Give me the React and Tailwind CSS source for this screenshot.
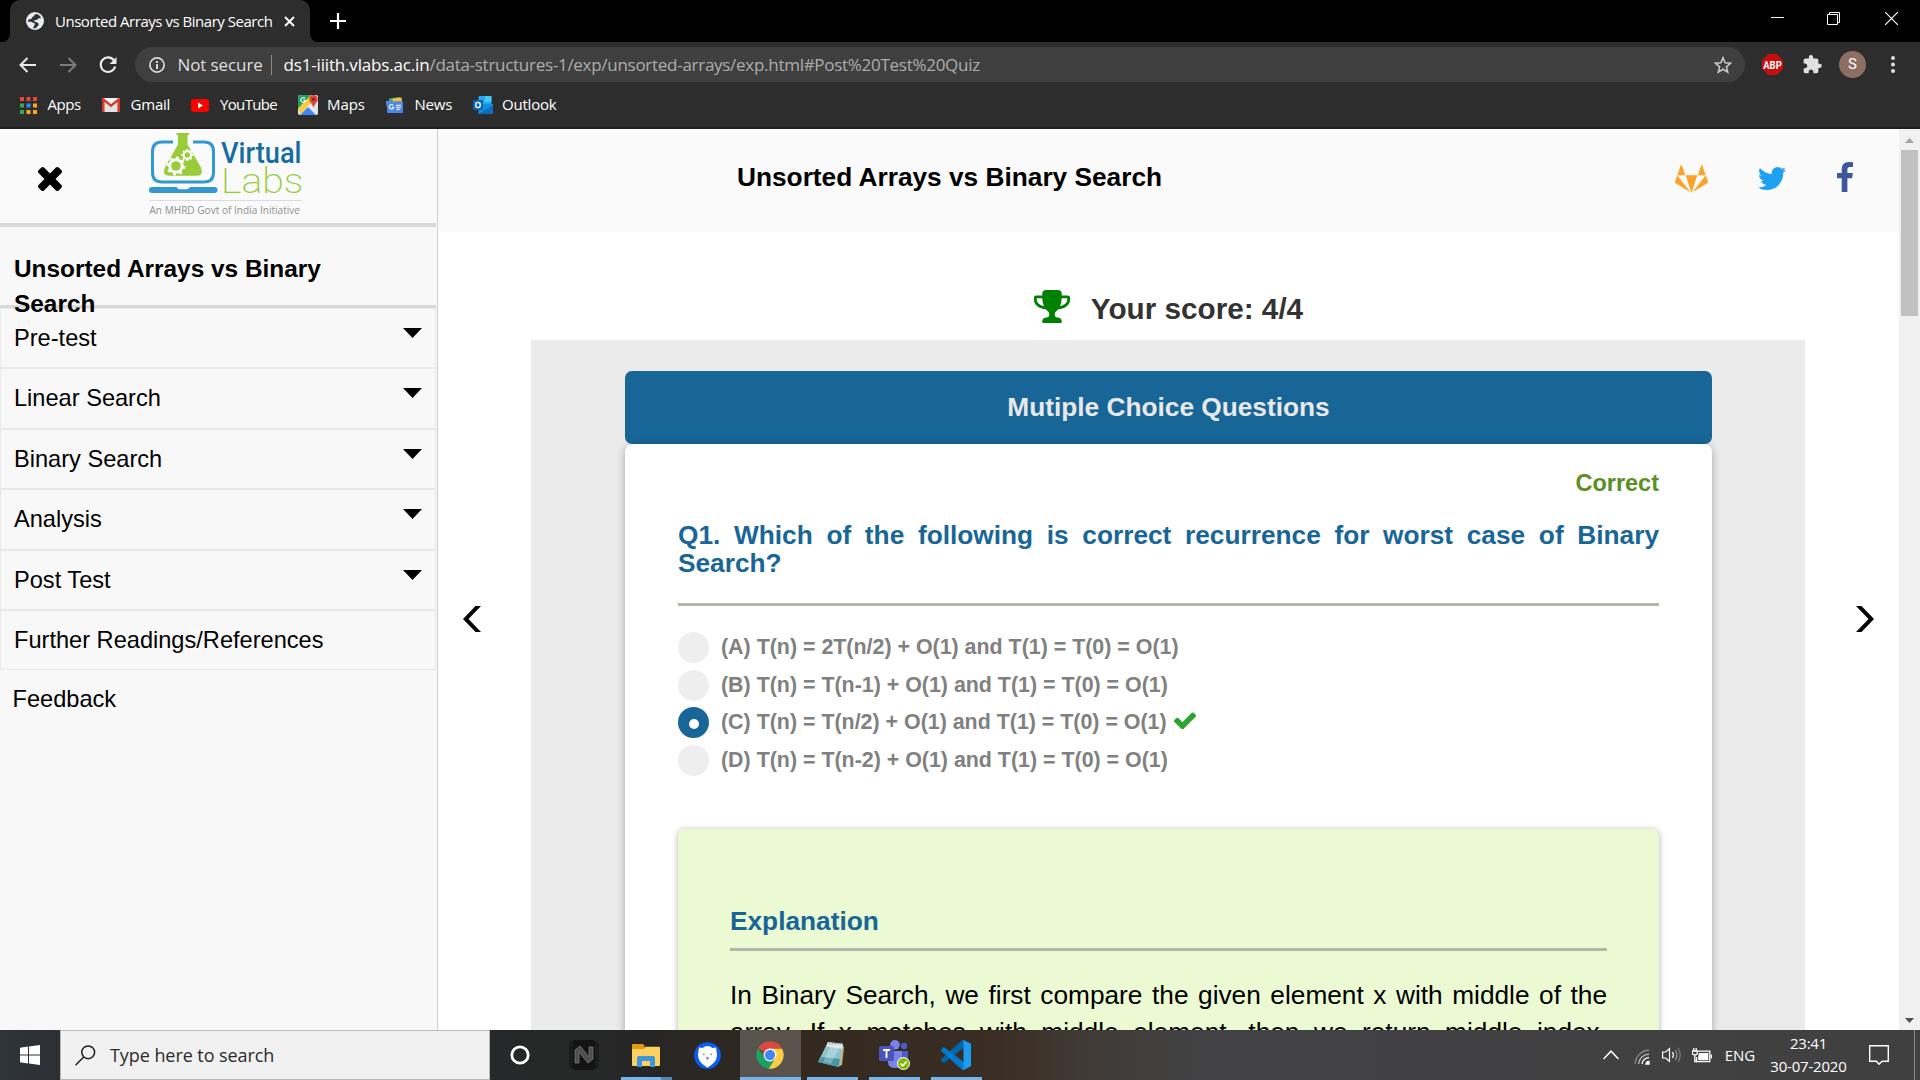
import React from "react";

/* ---------- Browser chrome ---------- */

function GlobeIcon() {
  return (
    <svg width="18" height="18" viewBox="0 0 18 18">
      <circle cx="9" cy="9" r="9" fill="#e8eaed" />
      <path d="M10.500 1.900C8 2.500 8.500 4 7.200 4.600c-1.300.5-.9 1.600-1.800 2.200-1 .6-2.300.3-3.300 1.300l.1 1.900c1.200-.9 2.600-.7 3.400.1.700.8 1.900.6 2.800 1.100.9.7.1 1.700-.2 2.500-.2.900-.8 1.700-1.400 2.300 1.100.3 2.200.3 3.300 0 .5-1.600 2.500-1.900 2.700-3.500 0-1.500-1.300-1.700-2.200-2.300-.9-.5-2.300-.2-2.600-1.100 0-1 1.400-.9 2.400-1.100 1.200-.3 1.300-1.500 2.500-1.800.8-.2 1.500.2 2.300-.1-1-2.200-2.500-3.700-4.700-4.200z" fill="#303134" />
    </svg>
  );
}

function TabStrip() {
  return (
    <div className="flex h-[42px] bg-black pl-[10px]">
      <div className="relative flex w-[300px] items-center rounded-t-[10px] bg-[#2d2d2d] pl-[16px]">
        <div className="absolute bottom-0 -left-[8px] h-[8px] w-[8px] bg-[#2d2d2d]">
          <div className="h-full w-full rounded-br-[8px] bg-black" />
        </div>
        <div className="absolute -right-[8px] bottom-0 h-[8px] w-[8px] bg-[#2d2d2d]">
          <div className="h-full w-full rounded-bl-[8px] bg-black" />
        </div>
        <GlobeIcon />
        <span className="ml-[11px] w-[224px] text-[15px] leading-[20px] tracking-[-0.47px] whitespace-nowrap text-white">
          Unsorted Arrays vs Binary Search
        </span>
        <svg className="ml-[5px]" width="11" height="11" viewBox="0 0 11 11">
          <path d="M1 1l9 9M10 1l-9 9" stroke="#fff" strokeWidth="1.900" />
        </svg>
      </div>
      <svg className="mt-[13px] ml-[19.500px]" width="16" height="16" viewBox="0 0 16 16">
        <path d="M8 0v16M0 8h16" stroke="#fff" strokeWidth="2.200" />
      </svg>
      <div className="mr-[22px] ml-auto flex items-start">
        <svg className="mt-[17px]" width="13" height="1" viewBox="0 0 13 1">
          <path d="M0 .5h13" stroke="#fff" />
        </svg>
        <svg className="mt-[12px] ml-[43px]" width="13" height="13" viewBox="0 0 13 13" fill="none" stroke="#fff">
          <path d="M.5 2.500h10v10h-10zM2.500 2.500v-2h10v10h-2" />
        </svg>
        <svg className="mt-[12px] ml-[45px]" width="13" height="13" viewBox="0 0 13 13">
          <path d="M0 0l13 13M13 0L0 13" stroke="#fff" strokeWidth="1.200" />
        </svg>
      </div>
    </div>
  );
}

function AddressBar() {
  return (
    <div className="flex h-[45px] items-center bg-[#2d2d2d] pl-[19px]">
      <svg width="17" height="16" viewBox="0 0 17 16" fill="none" stroke="#e8eaed" strokeWidth="2">
        <path d="M17 8H1.500M8.500 1l-7 7 7 7" />
      </svg>
      <svg className="ml-[24px]" width="17" height="16" viewBox="0 0 17 16" fill="none" stroke="#7c7c7c" strokeWidth="2">
        <path d="M0 8h15.500M8.500 1l7 7-7 7" />
      </svg>
      <svg className="ml-[22px]" width="18" height="18" viewBox="0 0 18 18">
        <path d="M14.800 4.200A7.300 7.300 0 1 0 16.100 10.500" fill="none" stroke="#e8eaed" strokeWidth="2.100" />
        <path d="M17.500 1v7h-7z" fill="#e8eaed" />
      </svg>
      <div className="ml-[18px] flex h-[35px] w-[1610px] items-center rounded-full bg-[#3f3f3f] pl-[14px] text-[17px] leading-[24px]">
        <svg width="16" height="16" viewBox="0 0 16 16">
          <circle cx="8" cy="8" r="7.100" fill="none" stroke="#dcdcdc" strokeWidth="1.700" />
          <path d="M8 7v5M8 4v1.900" stroke="#dcdcdc" strokeWidth="1.900" />
        </svg>
        <span className="ml-[12.500px] w-[85.500px] tracking-[-0.1px] whitespace-nowrap text-[#dedede]">Not secure</span>
        <span className="ml-[8px] h-[20px] w-px bg-[#8a8a8a]" />
        <span className="ml-[11.500px] tracking-[-0.17px] whitespace-nowrap text-white">ds1-iiith.vlabs.ac.in</span>
        <span className="tracking-[-0.280px] whitespace-nowrap text-[#adadad]">
          /data-structures-1/exp/unsorted-arrays/exp.html#Post%20Test%20Quiz
        </span>
        <svg className="mr-[13.500px] ml-auto" width="18" height="18" viewBox="0 0 18 18" fill="none" stroke="#c9c9c9" strokeWidth="1.600">
          <path d="M9 1.800l2.100 5 5.400.45-4.100 3.550 1.250 5.300L9 13.300l-4.650 2.800 1.250-5.300L1.500 7.250l5.400-.45z" />
        </svg>
      </div>
      <div className="ml-[17px] flex h-[21px] w-[21px]">
        <svg className="overflow-visible" width="21" height="21" viewBox="0 0 21 21">
          <path d="M6.200 0h8.600L21 6.200v8.600L14.800 21H6.200L0 14.800V6.200z" fill="#c70d0d" />
          <text x="10.500" y="14.500" textAnchor="middle" textLength="18.500" lengthAdjust="spacingAndGlyphs" fontFamily="Roboto, sans-serif" fontSize="11.500" fontWeight="700" fill="#fff">ABP</text>
        </svg>
      </div>
      <svg className="ml-[20px]" width="19" height="19" viewBox="1.500 1 21.500 22">
        <path d="M20.500 11H19V7c0-1.100-.9-2-2-2h-4V3.500a2.500 2.500 0 0 0-5 0V5H4c-1.100 0-2 .9-2 2v3.800h1.500c1.500 0 2.700 1.200 2.700 2.700S5 16.200 3.500 16.200H2V20c0 1.100.9 2 2 2h3.800v-1.500c0-1.500 1.200-2.700 2.700-2.700s2.700 1.200 2.700 2.700V22H17c1.100 0 2-.9 2-2v-4h1.500a2.500 2.500 0 0 0 0-5z" fill="#e0e0e0" />
      </svg>
      <div className="ml-[17px] flex h-[27px] w-[27px] items-center justify-center rounded-full bg-[#8d6e63] font-['Roboto'] text-[15px] text-white">S</div>
      <svg className="ml-[24.500px]" width="4" height="17" viewBox="0 0 4 17" fill="#e0e0e0">
        <circle cx="2" cy="2" r="2" />
        <circle cx="2" cy="8.500" r="2" />
        <circle cx="2" cy="15" r="2" />
      </svg>
    </div>
  );
}

function BookmarksBar() {
  return (
    <div className="flex h-[42px] items-start border-b-2 border-[#1e1e1e] bg-[#2d2d2d] pl-[20px] text-[15px] leading-[20px] whitespace-nowrap text-white">
      <div className="mt-[8px] flex h-[20px] w-[82px] items-center">
        <svg width="17" height="17" viewBox="0 0 17 17">
          <path d="M0 0h4v4H0zM6.500 0h4v4h-4zM13 0h4v4h-4z" fill="#e8453c" />
          <path d="M0 6.500h4v4H0z" fill="#34a853" />
          <path d="M6.500 6.500h4v4h-4z" fill="#2f86f6" />
          <path d="M13 6.500h4v4h-4zM6.500 13h4v4h-4zM13 13h4v4h-4z" fill="#f7a81b" />
          <path d="M0 13h4v4H0z" fill="#34a853" />
        </svg>
        <span className="-mt-[2px] ml-[10.500px] tracking-[-0.45px]">Apps</span>
      </div>
      <div className="mt-[8px] flex h-[20px] w-[89px] items-center">
        <svg width="18" height="14" viewBox="0 0 18 14">
          <rect width="18" height="14" rx="1.500" fill="#f2f2f2" />
          <path d="M3 14V4l6 5 6-5v10" fill="#e3e3e3" />
          <path d="M0 14V1.500C0 .6.6 0 1.400 0L9 6.300 16.600 0c.8 0 1.400.6 1.400 1.500V14h-2.600V4.100L9 9.300 2.600 4.100V14z" fill="#d8392f" />
        </svg>
        <span className="-mt-[2px] ml-[10.500px] tracking-[-0.2px]">Gmail</span>
      </div>
      <div className="mt-[8px] flex h-[20px] w-[107px] items-center">
        <svg width="18" height="13" viewBox="0 0 18 13">
          <rect width="18" height="13" rx="3" fill="#f00" />
          <path d="M7 3.600v5.800l5-2.900z" fill="#fff" />
        </svg>
        <span className="-mt-[2px] ml-[11px] tracking-[-0.65px]">YouTube</span>
      </div>
      <div className="mt-[8px] flex h-[20px] w-[88px] items-center">
        <svg width="20" height="20" viewBox="0 0 20 20">
          <rect width="20" height="20" rx="2" fill="#eceff1" />
          <path d="M2 0h12L0 15V2c0-1.100.9-2 2-2z" fill="#1fa463" />
          <path d="M0 13.500L13 0l3 5L2 19.500z" fill="#fbcb3c" />
          <path d="M2 20l8-8 8 8z" fill="#4285f4" />
          <path d="M11 9l9 9.500V4z" fill="#dfe3e8" />
          <path d="M15.500 0c2.500 0 4.300 1.900 4.300 4.200 0 3-2.800 3.800-4.300 8.300-1.400-4.500-4.200-5.300-4.200-8.300C11.300 1.900 13 0 15.500 0z" fill="#db4437" />
          <circle cx="15.500" cy="4.200" r="1.500" fill="#7c221b" />
          <path d="M6.900 3.300a2.400 2.400 0 1 0 .7 1.900H5.200" fill="none" stroke="#fff" strokeWidth="1.100" />
        </svg>
        <span className="-mt-[2px] ml-[9px] tracking-[-0.08px]">Maps</span>
      </div>
      <div className="mt-[8px] flex h-[20px] w-[87px] items-center">
        <svg width="18" height="16" viewBox="0 0 18 16">
          <path d="M3 1.500L14 0l1 5H3z" fill="#3bb35c" />
          <path d="M7 1.500L15.500.6 16 5H6z" fill="#f9c22e" />
          <path d="M0 4h4v6H.8z" fill="#6ca3f2" />
          <rect x="1" y="4.200" width="16" height="11.800" rx="1" fill="#4f86ec" />
          <path d="M7.200 8.300a2.200 2.200 0 1 0 .5 2H5.800M10 8.300h5M10 10.300h5M10 12.300h4" fill="none" stroke="#fff" strokeWidth="1.100" />
        </svg>
        <span className="-mt-[2px] ml-[10.500px] tracking-[-0.2px]">News</span>
      </div>
      <div className="mt-[8px] flex h-[20px] items-center">
        <svg width="20" height="18" viewBox="0 0 20 18">
          <rect x="5.500" width="13" height="11" rx="1" fill="#28a8ea" />
          <path d="M12 0h6.500v6H12z" fill="#50d9ff" opacity=".7" />
          <path d="M5.500 8h14.500v9c0 .6-.4 1-1 1H6.500c-.6 0-1-.4-1-1z" fill="#1490df" />
          <path d="M5.500 18L20 9v8c0 .6-.4 1-1 1z" fill="#0f6cbd" />
          <rect y="4" width="10" height="10" rx="1" fill="#0a64b8" />
          <ellipse cx="5" cy="9" rx="2.300" ry="2.600" fill="none" stroke="#fff" strokeWidth="1.400" />
        </svg>
        <span className="-mt-[2px] ml-[9px] tracking-[-0.2px]">Outlook</span>
      </div>
    </div>
  );
}

/* ---------- Sidebar ---------- */

function Logo() {
  const teeth = [0, 45, 90, 135];
  return (
    <svg className="overflow-visible" width="155" height="88" viewBox="148 131 155 88">
      <path d="M173 142h-11q-9.500 0-9.500 9.500v21q0 9.500 9.500 9.500h42q9.500 0 9.500-9.500v-21q0-9.500-9.500-9.500h-11" fill="none" stroke="#3398d0" strokeWidth="3" />
      <path d="M152 187h24.500q1.500 2.200 3 2.200h7.500q1.500 0 3-2.200h24.500q3 0 3 3t-3 3H152q-3 0-3-3t3-3z" fill="#3398d0" />
      <path d="M176.500 133h12.500v2h-1.500v9.500l13.300 22.500q3.500 8.700-4.300 8.700h-27q-8 0-4.400-8.700l12.900-22.500V135h-1.500z" fill="#99cc39" />
      <g stroke="#fff" strokeWidth="2.900">
        {teeth.map((a) => (
          <path key={a} d="M166.500 166h19" transform={`rotate(${a + 10} 176 166)`} />
        ))}
      </g>
      <circle cx="176" cy="166" r="7.700" fill="#fff" />
      <circle cx="176" cy="166" r="4.800" fill="#99cc39" />
      <g stroke="#fff" strokeWidth="2">
        {teeth.map((a) => (
          <path key={a} d="M181.300 155h12" transform={`rotate(${a} 187.300 155)`} />
        ))}
      </g>
      <circle cx="187.300" cy="155" r="4.800" fill="#fff" />
      <circle cx="187.300" cy="155" r="2.700" fill="#99cc39" />
      <text x="221" y="163" textLength="80.500" lengthAdjust="spacingAndGlyphs" fontFamily="Roboto, sans-serif" fontSize="29.500" fontWeight="500" fill="#156ca3">Virtual</text>
      <text x="221" y="193" textLength="82.500" lengthAdjust="spacingAndGlyphs" fontFamily="Roboto, sans-serif" fontSize="35" fontWeight="200" fill="#99cc39">Labs</text>
      <path d="M149 200.500h153" stroke="#dcdcdc" />
      <text x="149.500" y="213.700" textLength="150.500" lengthAdjust="spacingAndGlyphs" fontFamily="Open Sans, sans-serif" fontSize="11" fill="#8f8f8f">An MHRD Govt of India Initiative</text>
    </svg>
  );
}

const NAV = [
  { label: "Pre-test", caret: true },
  { label: "Linear Search", caret: true },
  { label: "Binary Search", caret: true },
  { label: "Analysis", caret: true },
  { label: "Post Test", caret: true },
  { label: "Further Readings/References", caret: false },
];

function Sidebar() {
  return (
    <aside className="flex w-[438px] shrink-0 flex-col border-r border-[#cfcfcf] bg-[#f8f8f8] font-['Liberation_Sans',sans-serif] text-black">
      <div className="mr-px flex h-[98px] items-start border-b-4 border-[#d9d9d9] bg-[#fafafa]">
        <svg className="mt-[38px] ml-[38px]" width="24" height="24" viewBox="302 366 1188 1188" preserveAspectRatio="none">
          <path d="M1490 1322q0 40-28 68l-136 136q-28 28-68 28t-68-28l-294-294-294 294q-28 28-68 28t-68-28l-136-136q-28-28-28-68t28-68l294-294-294-294q-28-28-28-68t28-68l136-136q28-28 68-28t68 28l294 294 294-294q28-28 68-28t68 28l136 136q28 28 28 68t-28 68l-294 294 294 294q28 28 28 68z" />
        </svg>
        <div className="mt-[2px] ml-[86px]">
          <Logo />
        </div>
      </div>
      <div className="mr-px h-[81px] border-b-[3px] border-[#d9d9d9] pt-[23.500px] pl-[14px]">
        <h2 className="relative z-10 w-[360px] text-[24.4px] leading-[35px] font-bold">Unsorted Arrays vs Binary Search</h2>
      </div>
      <nav className="mr-px">
        {NAV.map((item) => (
          <div key={item.label} className="flex h-[60.400px] items-start justify-between border border-[#e9e9e9] pr-[13px] pl-[13px]">
            <span className="mt-[11px] text-[23.600px] leading-[36px] whitespace-nowrap">{item.label}</span>
            {item.caret && (
              <svg className="mt-[19px]" width="19" height="10" viewBox="0 0 19 10">
                <path d="M0 0h19l-9.500 10z" />
              </svg>
            )}
          </div>
        ))}
      </nav>
      <div className="mt-[10.500px] ml-[12.500px] text-[23.600px] leading-[36px]">Feedback</div>
    </aside>
  );
}

/* ---------- Main content ---------- */

function MainHeader() {
  return (
    <header className="flex h-[103px] items-start bg-[#fafafa] pl-[299px]">
      <h1 className="mt-[32px] w-[936px] text-[26.250px] leading-[32px] font-bold whitespace-nowrap text-black">
        Unsorted Arrays vs Binary Search
      </h1>
      <svg className="mt-[35px] ml-[2px]" width="33" height="29" viewBox="0 0 33 29" fill="#fca326">
        <path d="M6.200 0l4.100 11.300H2.300zM26.800 0l3.900 11.300h-8zM10.700 11.300h11.600L16.500 29zM2.300 11.300L15.500 28.300.7 19.200Q-.2 18.500.1 17.500zM30.700 11.300L17.500 28.300l14.800-9.100q.9-.7.6-1.700z" />
      </svg>
      <svg className="mt-[38px] ml-[50px]" width="28" height="23" viewBox="108 256 1576 1280" preserveAspectRatio="none">
        <path fill="#1da1f2" d="M1684 408q-67 98-162 167 1 14 1 42 0 130-38 259.500t-115.500 248.500-184.500 210.500-258 146-323 54.500q-271 0-496-145 35 4 78 4 225 0 401-138-105-2-188-64.500t-114-159.500q33 5 61 5 43 0 85-11-112-23-185.500-111.500t-73.500-205.500v-4q68 38 146 41-66-44-105-115t-39-154q0-88 44-163 121 149 294.500 238.500t371.500 99.500q-8-38-8-74 0-134 94.500-228.500t228.500-94.500q140 0 236 102 109-21 205-78-37 115-142 178 93-10 186-50z" />
      </svg>
      <svg className="mt-[33px] ml-[51px]" width="16" height="30" viewBox="479 0 864 1664" preserveAspectRatio="none">
        <path fill="#3b5998" d="M1343 12v264h-157q-86 0-116 36t-30 108v189h293l-39 296h-254v759h-306v-759h-255v-296h255v-218q0-186 104-288.500t277-102.500q147 0 228 12z" />
      </svg>
    </header>
  );
}

const OPTIONS = [
  "(A) T(n) = 2T(n/2) + O(1) and T(1) = T(0) = O(1)",
  "(B) T(n) = T(n-1) + O(1) and T(1) = T(0) = O(1)",
  "(C) T(n) = T(n/2) + O(1) and T(1) = T(0) = O(1)",
  "(D) T(n) = T(n-2) + O(1) and T(1) = T(0) = O(1)",
];
const SELECTED = 2;

function Option({ text, selected }) {
  return (
    <div className="flex h-[37.600px] items-start">
      <div className={selected ? "flex h-[31.250px] w-[31.250px] items-center justify-center rounded-full bg-[#186697]" : "h-[31.250px] w-[31.250px] rounded-full bg-[#eeeeee]"}>
        {selected && <div className="mt-[2px] ml-[1px] h-[10px] w-[10px] rounded-full bg-white" />}
      </div>
      <span className="ml-[11.750px] text-[21.400px] leading-[31px] font-bold whitespace-nowrap text-[#808080]">{text}</span>
      {selected && (
        <svg className="mt-[5px] ml-[7px]" width="22" height="17" viewBox="121 302 1550 1188" preserveAspectRatio="none">
          <path fill="#2ca52c" d="M1671 566q0 40-28 68l-724 724-136 136q-28 28-68 28t-68-28l-136-136-362-362q-28-28-28-68t28-68l136-136q28-28 68-28t68 28l294 295 656-657q28-28 68-28t68 28l136 136q28 28 28 68z" />
        </svg>
      )}
    </div>
  );
}

function Quiz() {
  return (
    <section className="h-[690px] w-[1274px] shrink-0 overflow-hidden bg-[#ebebeb] pt-[31px] pr-[93px] pl-[94px]">
      <div className="flex h-[73px] items-center justify-center rounded-[7px] bg-[#186697] text-[26.250px] leading-[30px] font-bold text-[#e9e9e9]">
        <span className="-mt-[1px]">Mutiple Choice Questions</span>
      </div>
      <div className="h-[700px] rounded-t-[8px] bg-white px-[53px] pt-[24px] shadow-[0_2px_8px_rgba(0,0,0,0.3)]">
        <p className="text-right text-[23.500px] leading-[30px] font-bold text-[#5b8f22]">Correct</p>
        <div className="mt-[23px] text-[26.250px] leading-[28px] font-bold whitespace-nowrap text-[#186697]">
          <p className="[text-align-last:justify]">Q1. Which of the following is correct recurrence for worst case of Binary</p>
          <p>Search?</p>
        </div>
        <div className="mt-[26px] h-[3px] bg-[#b4b4aa]" />
        <div className="mt-[26px]">
          {OPTIONS.map((text, i) => (
            <Option key={text} text={text} selected={i === SELECTED} />
          ))}
        </div>
        <div className="mt-[46.600px] h-[300px] rounded-t-[6px] bg-[#ebfad2] px-[52px] pt-[78px] shadow-[0_1px_6px_rgba(0,0,0,0.3)]">
          <h3 className="text-[26.250px] leading-[28px] font-bold text-[#186697]">Explanation</h3>
          <div className="mt-[13px] h-[3px] bg-[#b3b6a9]" />
          <div className="mt-[26px] text-[26.250px] leading-[37px] whitespace-nowrap text-black">
            <p className="[text-align-last:justify]">In Binary Search, we first compare the given element x with middle of the</p>
            <p className="[text-align-last:justify]">array. If x matches with middle element, then we return middle index.</p>
          </div>
        </div>
      </div>
    </section>
  );
}

function Main() {
  return (
    <main className="flex w-[1461px] shrink-0 flex-col bg-white font-['Liberation_Sans',sans-serif]">
      <MainHeader />
      <div className="flex h-[108px] items-start justify-center pt-[58px]">
        <svg width="36" height="33" viewBox="64 128 1664 1536" preserveAspectRatio="none">
          <path fill="#008000" d="M521 883q-74-162-74-371h-256v96q0 78 94.500 162t235.500 113zm1079-275v-96h-256q0 209-74 371 141-29 235.500-113t94.500-162zm128-128v128q0 71-41.500 143t-112 130-173 97.500-215.500 44.500q-42 54-95 95-38 34-52.500 72.500t-14.500 89.500q0 54 30.500 91t97.500 37q75 0 133.500 45.500t58.500 114.500v64q0 14-9 23t-23 9h-832q-14 0-23-9t-9-23v-64q0-69 58.500-114.500t133.500-45.500q67 0 97.500-37t30.500-91q0-51-14.500-89.500t-52.500-72.500q-53-41-95-95-113-5-215.500-44.500t-173-97.500-112-130-41.500-143v-128q0-40 28-68t68-28h288v-96q0-66 47-113t113-47h576q66 0 113 47t47 113v96h288q40 0 68 28t28 68z" />
        </svg>
        <span className="ml-[21px] text-[29.700px] leading-[38px] font-bold text-[#333333]">Your score: 4/4</span>
      </div>
      <div className="flex items-start">
        <div className="w-[93px] pt-[266px] pl-[25px]">
          <svg width="18" height="26" viewBox="0 0 18 26">
            <path d="M12.500 0H18L5.500 13 18 26h-5.500L0 13z" />
          </svg>
        </div>
        <Quiz />
        <div className="w-[94px] pt-[266px] pl-[51px]">
          <svg width="18" height="26" viewBox="0 0 18 26">
            <path d="M5.500 0H0l12.500 13L0 26h5.500L18 13z" />
          </svg>
        </div>
      </div>
    </main>
  );
}

function Scrollbar() {
  return (
    <div className="flex w-[21px] flex-col items-center bg-[#f1f1f1]">
      <svg className="mt-[9px]" width="9" height="5" viewBox="0 0 9 5">
        <path d="M0 5h9L4.500 0z" fill="#a3a3a3" />
      </svg>
      <div className="mt-[7px] h-[166px] w-[17px] bg-[#c1c1c1]" />
      <svg className="mt-auto mb-[7px]" width="9" height="5" viewBox="0 0 9 5">
        <path d="M0 0h9L4.500 5z" fill="#505050" />
      </svg>
    </div>
  );
}

/* ---------- Taskbar ---------- */

function TaskIcon({ className, bar, children }) {
  return (
    <div className={`flex h-full flex-col items-center justify-between ${className}`}>
      <div className="flex h-[47px] items-center pt-[3px]">{children}</div>
      {bar ? <div className="h-[3px] w-full bg-[#76b4ee]" /> : null}
    </div>
  );
}

function Taskbar() {
  return (
    <footer className="flex h-[50px] bg-[linear-gradient(90deg,#2f3439_0px,#2c3034_60px,#262929_500px,#262626_640px,#33291f_800px,#3a2e24_1000px,#403a34_1080px,#424244_1200px,#404041_1920px)] font-['Open_Sans',sans-serif] text-white">
      <div className="flex w-[60px] items-center justify-center">
        <svg width="20" height="20" viewBox="0 0 20 20" fill="#fff">
          <path d="M0 2.800L8 1.600v7.900H0zM9 1.500L20 0v9.500H9zM0 10.500h8v7.900l-8-1.200zM9 10.500h11V20L9 18.500z" />
        </svg>
      </div>
      <div className="flex w-[430px] items-center border border-[#b8b8b8] bg-[#f1f1f1] pl-[14px] text-[#2b2b2b]">
        <svg width="21" height="21" viewBox="0 0 21 21" fill="none" stroke="#1f1f1f" strokeWidth="1.500">
          <circle cx="13.200" cy="7.300" r="6.400" />
          <path d="M8.700 11.900L.5 20.300" />
        </svg>
        <span className="ml-[14px] text-[18px] leading-[24px] tracking-[-0.07px]">Type here to search</span>
      </div>
      <TaskIcon className="w-[60px]">
        <svg width="20" height="20" viewBox="0 0 20 20">
          <circle cx="10" cy="10" r="8.200" fill="none" stroke="#fff" strokeWidth="2.800" />
        </svg>
      </TaskIcon>
      <TaskIcon className="ml-[3px] w-[62px]">
        <svg width="30" height="30" viewBox="0 0 30 30">
          <path d="M2 1h26l2 3v22l-2 3H2l-2-3V4z" fill="#1c1c1c" />
          <rect x="4" width="22" height="30" rx="2" fill="#131313" />
          <path d="M6 23V10l5-4 9 11V7h4v12l-5 4-9-11v11z" fill="#4e4e4e" stroke="#777" strokeWidth=".8" />
        </svg>
      </TaskIcon>
      <div className="ml-[6px] flex h-full w-[51px] flex-col items-center justify-between">
        <div className="flex h-[47px] items-center pt-[3px]">
          <svg className="-ml-[1px]" width="28" height="23" viewBox="0 0 28 23">
            <path d="M0 1q0-1 1-1h10l2 2.500-2 2.500H0z" fill="#e09c10" />
            <path d="M0 5h11l2.500-2.300H27q1 0 1 1V21q0 1-1 1H1q-1 0-1-1z" fill="#fbd15f" />
            <path d="M5 23V14q0-2 2-2h14q2 0 2 2v9h-5v-6h-8v6z" fill="#3d97dc" />
          </svg>
        </div>
        <div className="flex h-[3px] w-full">
          <div className="w-[40px] bg-[#76b4ee]" />
          <div className="w-[11px] bg-[#5688b4]" />
        </div>
      </div>
      <TaskIcon className="ml-[4px] w-[62px]">
        <svg width="27" height="27" viewBox="0 0 27 27">
          <circle cx="13.500" cy="13.500" r="13.300" fill="#0a5cf5" />
          <path d="M5 5.500l3.500.5Q13.500 2 18.500 6l3.500-.5 1 7q0 6-4.500 9.500-5 3.800-5 3.800T8.500 22Q4 18.500 4 12.500z" fill="#fff" />
          <path d="M13.500 14.500l1.800 1.800-1.800 1.500-1.800-1.500z" fill="#888" />
          <circle cx="9.800" cy="12.300" r=".9" fill="#888" />
          <circle cx="17.200" cy="12.300" r=".9" fill="#888" />
        </svg>
      </TaskIcon>
      <TaskIcon bar className="ml-[2px] w-[61px] bg-white/20">
        <svg className="-ml-[1px]" width="28" height="28" viewBox="0 0 48 48">
          <path d="M24 24L3.600 12.300A23.500 23.500 0 0 1 44.400 12.300L44.400 13.300H24z" fill="#db4a3f" />
          <path d="M3.600 12.300A23.500 23.500 0 0 0 21.800 47.400L33.300 29.400 24 24 14.700 29.400z" fill="#1aa260" />
          <path d="M44.700 13.300A23.500 23.500 0 0 1 21.800 47.400L33.300 29.400 24 13.300z" fill="#ffcd42" />
          <circle cx="24" cy="24" r="11" fill="#fff" />
          <circle cx="24" cy="24" r="8.800" fill="#4285f4" />
        </svg>
      </TaskIcon>
      <TaskIcon bar className="ml-[6px] w-[51px]">
        <svg className="-ml-[2px]" width="28" height="28" viewBox="0 0 28 28">
          <path d="M23 3l3 3-2 18-5 2z" fill="#c9b27a" />
          <path d="M10 1l15 2-4 23L0 21z" fill="#8cc3cf" />
          <path d="M10 1l15 2-1 5L8 5.500z" fill="#dfe7ea" />
          <path d="M4 16l18 2-1.500 8L0 21z" fill="#4b96a6" />
          <path d="M11 2.500h13" stroke="#8f9496" strokeWidth="1.500" strokeDasharray="1.500 1.300" />
          <path d="M12 6l-7 15 8 2 8-16z" fill="#fff" opacity=".25" />
        </svg>
      </TaskIcon>
      <TaskIcon bar className="ml-[11px] w-[51px]">
        <svg width="31" height="30" viewBox="0 0 31 30">
          <circle cx="25" cy="6" r="3.200" fill="#5059c9" />
          <path d="M20 11h9v9q0 5-5 5h-4z" fill="#5059c9" />
          <circle cx="16" cy="4.800" r="4.800" fill="#7b83eb" />
          <path d="M9 11h14v11q0 6-7 6t-7-6z" fill="#7b83eb" />
          <rect y="6" width="15" height="15" rx="1.500" fill="#4b53bc" />
          <path d="M4 10h7M7.500 10v8" stroke="#fff" strokeWidth="1.900" />
          <circle cx="24.500" cy="23.500" r="6.500" fill="#fff" />
          <circle cx="24.500" cy="23.500" r="5.500" fill="#7fba00" />
          <path d="M21.500 23.500l2.200 2.300 3.900-4.300" fill="none" stroke="#fff" strokeWidth="1.700" />
        </svg>
      </TaskIcon>
      <TaskIcon bar className="ml-[11px] w-[51px]">
        <svg className="-ml-[1px]" width="30" height="30" viewBox="0 0 100 100">
          <path d="M96.500 10.700L75.900.8c-2.400-1.200-5.200-.7-7.100 1.200L1.300 63.400c-1.800 1.600-1.800 4.500 0 6.100l5.500 5c1.500 1.400 3.700 1.500 5.300.2L93.300 13.400c2.700-2.100 6.600-.1 6.600 3.300v-.3c0-2.400-1.300-4.600-3.400-5.700z" fill="#0065a9" />
          <path d="M96.500 89.300L75.900 99.200c-2.400 1.200-5.200.7-7.100-1.200L1.300 36.600c-1.800-1.600-1.800-4.500 0-6.100l5.500-5c1.500-1.400 3.700-1.500 5.300-.2l81.200 61.300c2.700 2.100 6.600.1 6.600-3.300v.3c0 2.400-1.300 4.600-3.400 5.700z" fill="#007acc" />
          <path d="M75.900 99.200c-2.400 1.200-5.200.7-7.100-1.200 2.300 2.300 6.200.7 6.200-2.600V4.700c0-3.300-3.900-4.900-6.200-2.600 1.900-1.900 4.700-2.400 7.100-1.200l20.600 9.900c2.100 1 3.500 3.200 3.500 5.600v67.200c0 2.400-1.400 4.600-3.500 5.600z" fill="#1f9cf0" />
        </svg>
      </TaskIcon>
      <div className="mr-[5px] ml-auto flex items-center">
        <svg width="16" height="10" viewBox="0 0 16 10" fill="none" stroke="#fff" strokeWidth="1.500">
          <path d="M.5 9L8 1.200 15.500 9" />
        </svg>
        <svg className="mt-[2px] ml-[15px]" width="16" height="17" viewBox="0 0 16 17" fill="none" strokeWidth="1.300">
          <path d="M1 16A15 15 0 0 1 15 2" stroke="#8b8b8b" />
          <path d="M4.500 16A11 11 0 0 1 15 6" stroke="#b5b5b5" />
          <path d="M8 16a7 7 0 0 1 7-6.300" stroke="#fff" />
          <path d="M12 16a3 3 0 0 1 3-2.600v2.600z" fill="#fff" stroke="#fff" />
        </svg>
        <svg className="ml-[12px]" width="20" height="18" viewBox="0 0 20 18" fill="none" strokeWidth="1.200">
          <path d="M.6 6h3L7.500 2.500v13L3.600 12h-3z" stroke="#fff" />
          <path d="M10.500 6.200q2 2.800 0 5.600" stroke="#fff" />
          <path d="M13.300 4.200q3.200 4.800 0 9.600" stroke="#9b9b9b" />
          <path d="M16 1.800q4.500 7.200 0 14.400" stroke="#7b7b7b" />
        </svg>
        <svg className="ml-[10px]" width="20" height="15" viewBox="0 0 20 15" fill="none" stroke="#fff" strokeWidth="1.300">
          <path d="M6 3.200h11.800v10.500H4.500V9" />
          <path d="M7 5h9.300v7.200H6.200V8z" fill="#fff" stroke="none" />
          <path d="M19.300 6.500v4M1.800 0v3M4.200 0v3M.3 3h5v2.200q0 1.500-2.500 1.500T.3 5.200zM2.800 7v6.500h2" />
        </svg>
        <span className="ml-[12.500px] text-[15px] leading-[20px] tracking-[-0.1px]">ENG</span>
        <div className="ml-[15px] flex w-[77px] flex-col items-center text-[15px] leading-[23px] tracking-[-0.2px] whitespace-nowrap">
          <span>23:41</span>
          <span>30-07-2020</span>
        </div>
        <svg className="ml-[22px]" width="20" height="20" viewBox="0 0 20 20" fill="none" stroke="#fff" strokeWidth="1.400">
          <path d="M.7.700h18.600v15.500h-6.100L10 19.200l-2.500-3H.7z" />
        </svg>
        <div className="ml-[25px] h-[50px] w-px bg-[#8a8a8a]" />
      </div>
    </footer>
  );
}

export default function App() {
  return (
    <div className="flex h-[1080px] w-[1920px] flex-col overflow-hidden bg-white">
      <div className="shrink-0 font-['Open_Sans',sans-serif]">
        <TabStrip />
        <AddressBar />
        <BookmarksBar />
      </div>
      <div className="flex min-h-0 flex-1 overflow-hidden">
        <Sidebar />
        <Main />
        <Scrollbar />
      </div>
      <div className="shrink-0">
        <Taskbar />
      </div>
    </div>
  );
}
